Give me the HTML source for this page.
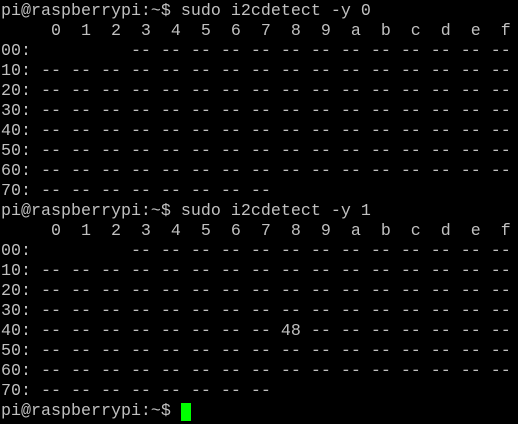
<!DOCTYPE html><html><head><style>
html,body{margin:0;padding:0;background:#000;width:518px;height:424px;overflow:hidden}
pre{margin:0;padding:2px 0 0 1px;font-family:"Liberation Mono",monospace;font-size:16.6667px;line-height:20px;color:#c0c0c0}
.c{display:inline-block;width:10px;height:18px;background:#00ff00;vertical-align:top;margin-top:1px}
</style></head><body><pre>pi@raspberrypi:~$ sudo i2cdetect -y 0
     0  1  2  3  4  5  6  7  8  9  a  b  c  d  e  f
00:          -- -- -- -- -- -- -- -- -- -- -- -- --
10: -- -- -- -- -- -- -- -- -- -- -- -- -- -- -- --
20: -- -- -- -- -- -- -- -- -- -- -- -- -- -- -- --
30: -- -- -- -- -- -- -- -- -- -- -- -- -- -- -- --
40: -- -- -- -- -- -- -- -- -- -- -- -- -- -- -- --
50: -- -- -- -- -- -- -- -- -- -- -- -- -- -- -- --
60: -- -- -- -- -- -- -- -- -- -- -- -- -- -- -- --
70: -- -- -- -- -- -- -- --
pi@raspberrypi:~$ sudo i2cdetect -y 1
     0  1  2  3  4  5  6  7  8  9  a  b  c  d  e  f
00:          -- -- -- -- -- -- -- -- -- -- -- -- --
10: -- -- -- -- -- -- -- -- -- -- -- -- -- -- -- --
20: -- -- -- -- -- -- -- -- -- -- -- -- -- -- -- --
30: -- -- -- -- -- -- -- -- -- -- -- -- -- -- -- --
40: -- -- -- -- -- -- -- -- 48 -- -- -- -- -- -- --
50: -- -- -- -- -- -- -- -- -- -- -- -- -- -- -- --
60: -- -- -- -- -- -- -- -- -- -- -- -- -- -- -- --
70: -- -- -- -- -- -- -- --
pi@raspberrypi:~$ <span class="c"></span></pre></body></html>
